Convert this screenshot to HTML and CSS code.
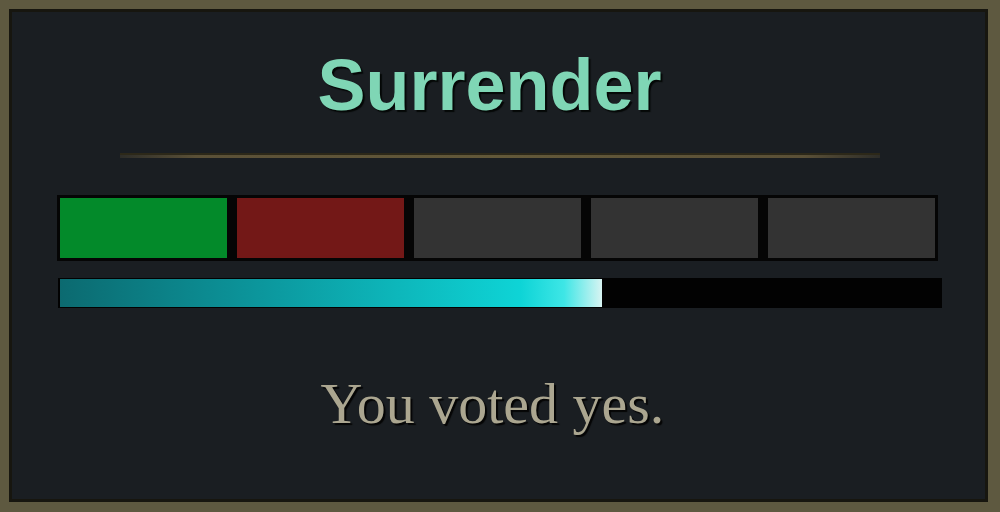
FILE: index.html
```html
<!DOCTYPE html>
<html lang="en">
<head>
    <meta charset="UTF-8">
    <title>Surrender</title>
    <link rel="stylesheet" href="styles.css">
</head>
<body>
    <div class="panel">
        <h1 class="title">Surrender</h1>
        <div class="divider"></div>

        <div class="votes">
            <div class="vote yes"></div>
            <div class="vote no"></div>
            <div class="vote"></div>
            <div class="vote"></div>
            <div class="vote"></div>
        </div>

        <div class="timer">
            <div class="timer-fill" style="width: 61.6%"></div>
        </div>

        <p class="status">You voted yes.</p>
    </div>
</body>
</html>
```

FILE: styles.css
```css
html, body {
    margin: 0;
    padding: 0;
    background: #1a1e22;
}

.panel {
    box-sizing: border-box;
    width: 1000px;
    height: 512px;
    border: 9px solid #5e5940;
    border-bottom-width: 10px;
    border-right-width: 12px;
    background: #1a1e22;
    box-shadow: inset 0 0 0 3px #17160f;
    display: flex;
    flex-direction: column;
    padding-top: 40px;
}

.title {
    margin: 0;
    font-family: 'Liberation Sans', Arial, sans-serif;
    font-weight: bold;
    font-size: 72px;
    line-height: 1;
    text-align: center;
    color: #7fd6b5;
    text-shadow: 2px 2px 1px #050807;
    padding-right: 18px;
}

.divider {
    width: 760px;
    height: 3px;
    margin: 32px 0 0 111px;
    background: linear-gradient(90deg, rgba(90, 80, 55, 0.3) 0%, #5a5037 10%, #625839 50%, #5a5037 90%, rgba(90, 80, 55, 0.3) 100%);
    border-top: 2px solid #2c2819;
}

.votes {
    display: flex;
    gap: 10px;
    width: 881px;
    height: 66px;
    box-sizing: border-box;
    padding: 3px;
    margin: 37px 0 0 48px;
    background: #050505;
}

.vote {
    flex: 1;
    background: #333333;
}

.vote.yes {
    background: #038a2a;
}

.vote.no {
    background: #731817;
}

.timer {
    width: 884px;
    height: 30px;
    box-sizing: border-box;
    padding: 1px 2px;
    margin: 17px 0 0 49px;
    background: #020202;
}

.timer-fill {
    height: 100%;
    background: linear-gradient(90deg, #0c6a70 0%, #0c9aa0 40%, #0ed4d6 85%, #3ee6e6 93%, #d8f4f2 100%);
}

.status {
    margin: 67px 0 0;
    font-family: 'Liberation Serif', 'Times New Roman', serif;
    font-size: 58px;
    line-height: 1;
    text-align: center;
    color: #aba690;
    letter-spacing: 0;
    text-shadow: 2px 2px 1px #050505;
    padding-right: 12px;
}
```
